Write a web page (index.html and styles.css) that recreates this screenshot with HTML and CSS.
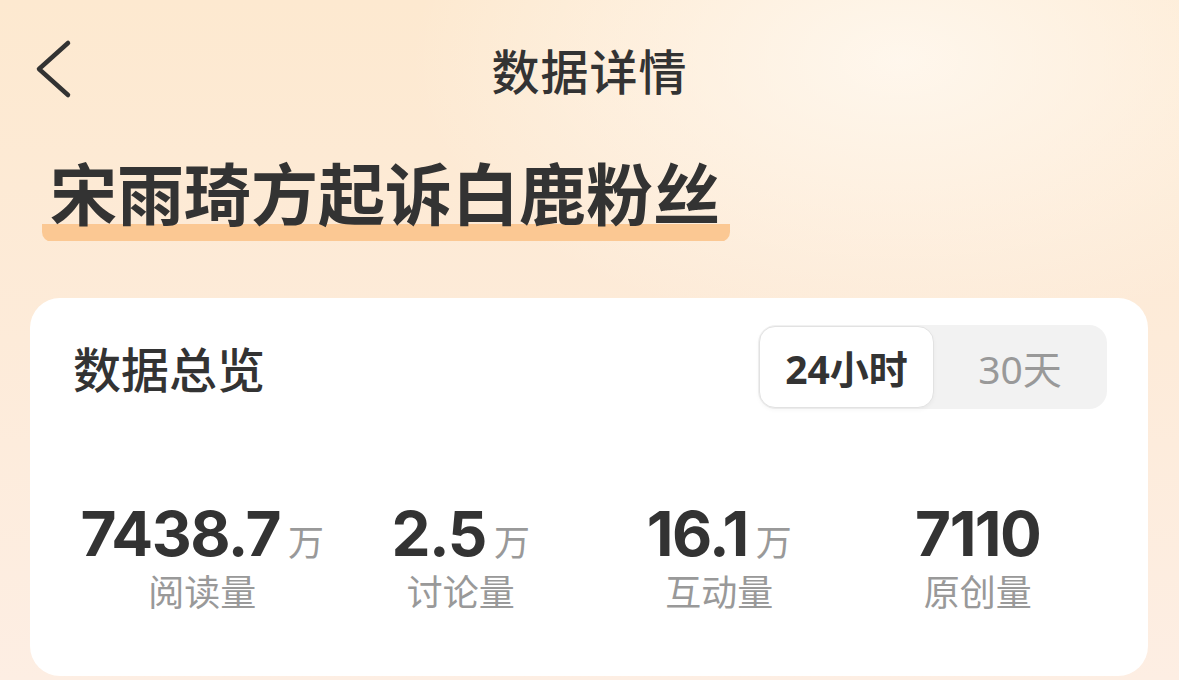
FILE: index.html
```html
<!DOCTYPE html>
<html lang="zh-CN">
<head>
<meta charset="utf-8">
<title>数据详情</title>
<link rel="stylesheet" href="styles.css">
</head>
<body>
<div class="page">
  <header class="nav">
    <svg class="back" width="40" height="60" viewBox="0 0 40 60">
      <polyline points="33,4 4,30 33,56" fill="none" stroke="#333" stroke-width="4.5" stroke-linecap="round" stroke-linejoin="round"/>
    </svg>
    <div class="nav-title">数据详情</div>
  </header>
  <h1 class="topic"><span class="topic-text">宋雨琦方起诉白鹿粉丝</span></h1>
  <section class="card">
    <div class="card-head">
      <div class="card-title">数据总览</div>
      <div class="seg">
        <div class="seg-item active">24小时</div>
        <div class="seg-item">30天</div>
      </div>
    </div>
    <div class="stats">
      <div class="stat">
        <div class="num"><span class="digits">7438.7</span><span class="unit">万</span></div>
        <div class="label">阅读量</div>
      </div>
      <div class="stat">
        <div class="num"><span class="digits">2.5</span><span class="unit">万</span></div>
        <div class="label">讨论量</div>
      </div>
      <div class="stat">
        <div class="num"><span class="digits">16.1</span><span class="unit">万</span></div>
        <div class="label">互动量</div>
      </div>
      <div class="stat">
        <div class="num"><span class="digits">7110</span></div>
        <div class="label">原创量</div>
      </div>
    </div>
  </section>
</div>
</body>
</html>
```

FILE: styles.css
```css
* { box-sizing: border-box; }
html, body { margin: 0; padding: 0; }
body {
  width: 1179px;
  height: 680px;
  overflow: hidden;
  font-family: "Noto Sans", "Noto Sans CJK SC", sans-serif;
  color: #333;
  background:
    radial-gradient(ellipse 700px 400px at 900px 60px, rgba(255,249,241,0.85), rgba(255,249,241,0) 70%),
    linear-gradient(180deg, #fde9d0 0%, #fdebd9 50%, #fdeee3 100%);
}
.page { display: flex; flex-direction: column; }
.nav {
  position: relative;
  height: 140px;
  display: flex;
  align-items: center;
  justify-content: center;
}
.back { position: absolute; left: 35px; top: 39px; }
.nav-title {
  font-size: 48px;
  font-weight: 500;
  color: #333;
  letter-spacing: 1px;
  margin-top: -2px;
}
.topic {
  margin: 0;
  padding-left: 42px;
  height: 158px;
  font-weight: 700;
  font-size: 67px;
  line-height: 1;
}
.topic-text {
  display: inline-block;
  margin-top: 6px;
  padding: 0 10px 0 8px;
  color: #333;
  background: linear-gradient(180deg, transparent 0, transparent 78px, #fbc893 78px, #fbc893 95px, transparent 95px);
  border-radius: 10px;
  height: 96px;
  line-height: 96px;
}
.card {
  margin: 0 31px 0 30px;
  height: 378px;
  background: #fff;
  border-radius: 30px;
  padding: 27px 41px 0 43px;
}
.card-head {
  display: flex;
  justify-content: space-between;
  align-items: center;
}
.card-title {
  font-size: 48px;
  font-weight: 500;
  color: #333;
}
.seg {
  display: flex;
  width: 349px;
  height: 84px;
  background: #f2f2f2;
  border-radius: 18px;
  padding: 1px;
}
.seg-item {
  flex: 1;
  display: flex;
  align-items: center;
  justify-content: center;
  font-size: 39px;
  color: #999;
}
.seg-item.active {
  flex: 0 0 175px;
  background: #fff;
  border: 1.5px solid #e2e2e2;
  border-radius: 16px;
  color: #333;
  font-weight: 700;
  box-shadow: 0 2px 4px rgba(0,0,0,0.04);
}
.stats {
  display: grid;
  grid-template-columns: repeat(4, 1fr);
  margin-top: 94px;
}
.stat {
  display: flex;
  flex-direction: column;
  align-items: center;
}
.num {
  display: flex;
  align-items: baseline;
  height: 62px;
  line-height: 62px;
}
.digits {
  font-family: Inter, "Noto Sans", sans-serif;
  font-size: 62px;
  line-height: 62px;
  font-weight: 700;
  color: #333;
  letter-spacing: -1.5px;
}
.unit {
  font-size: 36px;
  line-height: 40px;
  font-weight: 400;
  color: #999;
  margin-left: 8px;
}
.label {
  font-size: 36px;
  color: #999;
  margin-top: 8px;
  line-height: 40px;
}
```
